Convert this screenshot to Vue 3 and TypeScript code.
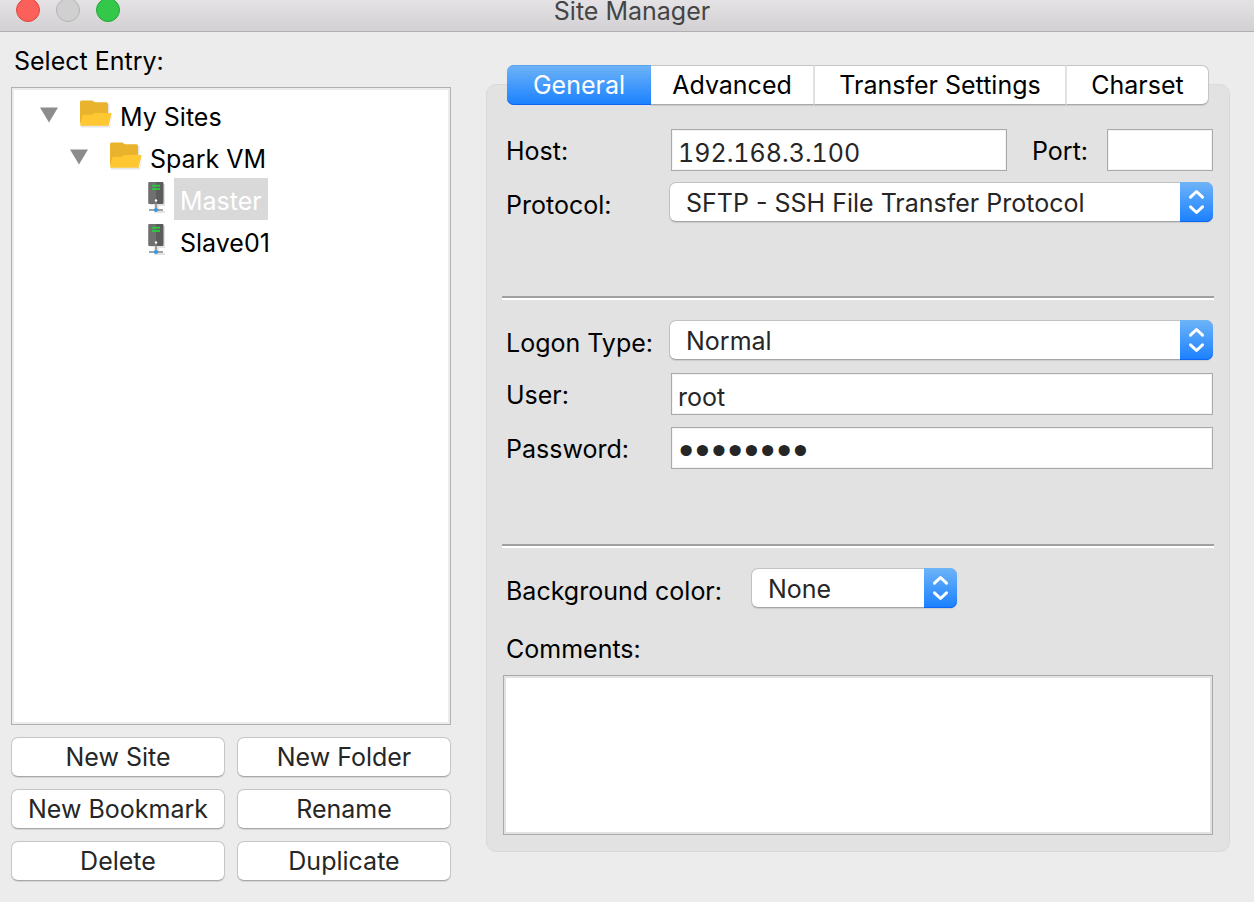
<script setup lang="ts">
import { ref } from 'vue'

interface TreeEntry {
  name: string
  level: number
  kind: 'folder' | 'server'
}

const entries: TreeEntry[] = [
  { name: 'My Sites', level: 0, kind: 'folder' },
  { name: 'Spark VM', level: 1, kind: 'folder' },
  { name: 'Master', level: 2, kind: 'server' },
  { name: 'Slave01', level: 2, kind: 'server' },
]
const actions: string[] = ['New Site', 'New Folder', 'New Bookmark', 'Rename', 'Delete', 'Duplicate']
const tabs: string[] = ['General', 'Advanced', 'Transfer Settings', 'Charset']

const selected = ref('Master')
const activeTab = ref('General')
const host = ref('192.168.3.100')
const port = ref('')
const protocol = ref('SFTP - SSH File Transfer Protocol')
const logonType = ref('Normal')
const user = ref('root')
const password = ref('password')
const background = ref('None')
const comments = ref('')
</script>

<template>
  <div class="window">
    <header class="titlebar">
      <div class="lights">
        <button class="light close" type="button" aria-label="Close"></button>
        <button class="light minimize" type="button" aria-label="Minimize" disabled></button>
        <button class="light maximize" type="button" aria-label="Zoom"></button>
      </div>
      <h1 class="title">Site Manager</h1>
    </header>

    <main class="content">
      <section class="sidebar">
        <h2 id="entry-label" class="heading">Select Entry:</h2>
        <ul class="tree" role="tree" aria-labelledby="entry-label">
          <li
            v-for="entry in entries"
            :key="entry.name"
            class="entry"
            :class="['level-' + entry.level, { selected: entry.name === selected }]"
            role="treeitem"
            :aria-selected="entry.name === selected"
            @click="selected = entry.name"
          >
            <svg v-if="entry.kind === 'folder'" class="arrow" viewBox="0 0 18 16" aria-hidden="true">
              <path d="M0 0.5H18L9 15.5Z" fill="#8c8c8c" />
            </svg>
            <svg v-if="entry.kind === 'folder'" class="icon" viewBox="0 0 32 36" aria-hidden="true">
              <path d="M1 30.5V28H30L32 17V20L30 30.5Z" fill="#e6e6e6" />
              <path d="M28 7H29.500V17H28Z" fill="#e6e6e6" />
              <path d="M0 5Q0 3.500 1.500 3.500H12Q13 3.500 13.700 4.500Q14.200 5.300 15.500 5.300H26.500Q28 5.300 28 7V26H0Z" fill="#e9b32d" />
              <path d="M0 28.500L2.300 18.800Q2.600 17.800 3.700 17.800H11.500L14 16H31.600L29 27.500Q28.700 28.800 27.500 28.800H1Q0 28.800 0 28.500Z" fill="#ffc832" />
            </svg>
            <svg v-else class="icon" viewBox="0 0 32 36" aria-hidden="true">
              <path d="M10 3H25V25H19V30H25V32H14V24H10Z" fill="#e3e3e3" />
              <rect x="8.500" y="1" width="15" height="22" rx="1" fill="#5c5c5c" />
              <path d="M9.500 1H16V23H9.500Q8.500 23 8.500 22V2Q8.500 1 9.500 1Z" fill="#707070" />
              <path d="M12 4.800H20M12 8H20" stroke="#32c341" stroke-width="2" />
              <path d="M16 20V28" stroke="#858585" stroke-width="1.500" />
              <circle cx="16" cy="19.500" r="1.200" fill="#fff" />
              <path d="M9 29H23" stroke="#858585" stroke-width="1.500" />
              <circle cx="16" cy="29" r="2" fill="#2d9be8" />
            </svg>
            <span class="entry-name">{{ entry.name }}</span>
          </li>
        </ul>
        <div class="actions">
          <button v-for="action in actions" :key="action" class="action" type="button">{{ action }}</button>
        </div>
      </section>

      <section class="details">
        <div class="tabs" role="tablist">
          <button
            v-for="tab in tabs"
            :key="tab"
            class="tab"
            :class="{ active: tab === activeTab }"
            type="button"
            role="tab"
            :aria-selected="tab === activeTab"
            @click="activeTab = tab"
          >{{ tab }}</button>
        </div>

        <form class="panel" @submit.prevent>
          <div class="group server-group">
            <div class="row">
              <label class="label" for="host">Host:</label>
              <input id="host" v-model="host" class="field" type="text" />
              <label class="port-label" for="port">Port:</label>
              <input id="port" v-model="port" class="field port" type="text" />
            </div>
            <div class="row select-row">
              <label class="label" for="protocol">Protocol:</label>
              <div class="select">
                <select id="protocol" v-model="protocol">
                  <option>SFTP - SSH File Transfer Protocol</option>
                </select>
                <svg class="stepper" viewBox="0 0 33 40" aria-hidden="true">
                  <path d="M10.500 15.200L16.500 9.500L22.500 15.200M10.500 24.800L16.500 30.500L22.500 24.800" />
                </svg>
              </div>
            </div>
          </div>

          <hr class="separator" />

          <div class="group logon-group">
            <div class="row select-row">
              <label class="label" for="logon">Logon Type:</label>
              <div class="select">
                <select id="logon" v-model="logonType">
                  <option>Normal</option>
                </select>
                <svg class="stepper" viewBox="0 0 33 40" aria-hidden="true">
                  <path d="M10.500 15.200L16.500 9.500L22.500 15.200M10.500 24.800L16.500 30.500L22.500 24.800" />
                </svg>
              </div>
            </div>
            <div class="row">
              <label class="label" for="user">User:</label>
              <input id="user" v-model="user" class="field" type="text" />
            </div>
            <div class="row">
              <label class="label" for="password">Password:</label>
              <input id="password" v-model="password" class="field password" type="password" />
            </div>
          </div>

          <hr class="separator" />

          <div class="row select-row">
            <label class="background-label" for="background">Background color:</label>
            <div class="select compact">
              <select id="background" v-model="background">
                <option>None</option>
              </select>
              <svg class="stepper" viewBox="0 0 33 40" aria-hidden="true">
                <path d="M10.500 15.200L16.500 9.500L22.500 15.200M10.500 24.800L16.500 30.500L22.500 24.800" />
              </svg>
            </div>
          </div>
          <label class="comments-label" for="comments">Comments:</label>
          <textarea id="comments" v-model="comments" class="comments"></textarea>
        </form>
      </section>
    </main>
  </div>
</template>

<style>
body {
  margin: 0;
  background: #ececec;
}
</style>

<style scoped>
.window {
  display: flex;
  flex-direction: column;
  min-height: 100vh;
  box-sizing: border-box;
  background: #ececec;
  color: #000;
  font-family: Inter, Roboto, "Liberation Sans", sans-serif;
  font-size: 25px;
  line-height: 30px;
}

.window *,
.window *::before {
  box-sizing: border-box;
}

button,
input,
select,
textarea {
  margin: 0;
  font: inherit;
  color: #262626;
  outline: none;
}

/* Title bar */
.titlebar {
  display: grid;
  grid-template-columns: 1fr auto 1fr;
  grid-template-rows: 20px;
  align-items: center;
  height: 32px;
  padding: 0 0 11px 10px;
  overflow: hidden;
  border-bottom: 1px solid #b1afb1;
  background: linear-gradient(#e4e2e4, #d2d0d2);
}

.lights {
  display: flex;
  gap: 16px;
  height: 24px;
  padding-left: 6px;
}

.light {
  width: 24px;
  height: 24px;
  padding: 0;
  border: 1px solid;
  border-radius: 50%;
}

.close {
  background: #fc605b;
  border-color: #e2463f;
}

.minimize {
  background: #d0d0d0;
  border-color: #b4b4b4;
}

.maximize {
  background: #34c84a;
  border-color: #20a835;
}

.title {
  align-self: start;
  margin: 0;
  color: #454545;
  font-size: 25px;
  font-weight: 400;
  line-height: 22px;
}

/* Two-column body */
.content {
  flex: 1;
  display: grid;
  grid-template-columns: minmax(0, 440fr) minmax(0, 744fr);
  gap: 35px;
  padding: 0 24px 0 11px;
}

.sidebar {
  display: flex;
  flex-direction: column;
  padding: 14px 0 21px;
}

.heading {
  margin: 0 0 11px 3px;
  font-size: 25px;
  font-weight: 400;
  line-height: 30px;
}

.tree {
  flex: 1;
  margin: 0 0 12px;
  padding: 6px 2px;
  list-style: none;
  background: #fff;
  border: 1px solid #b0b0b0;
  box-shadow: inset 0 0 0 2px #ececec;
}

.entry {
  display: flex;
  align-items: center;
  height: 42px;
  cursor: default;
}

.level-0 {
  padding-left: 26px;
}

.level-1 {
  padding-left: 56px;
}

.level-2 {
  padding-left: 126px;
}

.arrow {
  width: 18px;
  height: 16px;
  margin-right: 22px;
}

.icon {
  width: 32px;
  height: 36px;
  margin-right: 2px;
}

.entry-name {
  padding: 8px 6px 4px;
}

.selected .entry-name {
  background: #d9d9d9;
  color: #fff;
}

.actions {
  display: grid;
  grid-template-columns: 1fr 1fr;
  gap: 12px;
}

.action {
  height: 40px;
  padding: 0;
  border: 1px solid #c6c6c6;
  border-bottom-color: #a8a8a8;
  border-radius: 7px;
  background: #fff;
  box-shadow: 0 1px 1px rgba(0, 0, 0, 0.1);
}

/* Tabs */
.details {
  display: flex;
  flex-direction: column;
  padding: 33px 0 50px;
}

.tabs {
  position: relative;
  z-index: 1;
  display: grid;
  grid-template-columns: 144px 164px 252px 142px;
  justify-content: center;
  height: 40px;
  margin: 0 21px -21px;
}

.tab {
  padding: 0;
  border: 1px solid #c6c6c6;
  border-bottom-color: #a8a8a8;
  border-left: 0;
  border-right: 2px solid #e2e2e2;
  background: #fff;
  box-shadow: 0 1px 1px rgba(0, 0, 0, 0.1);
  color: #000;
}

.tab:first-child {
  border-radius: 7px 0 0 7px;
}

.tab:last-child {
  border-right: 1px solid #c6c6c6;
  border-radius: 0 7px 7px 0;
}

.tab.active {
  border: 0;
  background: linear-gradient(#6eb4f8, #1a80ff);
  box-shadow: inset 0 1px 0 #5aa3ee, inset 0 -1px 0 #0f66f5;
  color: #fff;
}

/* General panel */
.panel {
  flex: 1;
  display: flex;
  flex-direction: column;
  padding: 44px 16px 16px 15px;
  border: 1px solid #d9d9d9;
  border-radius: 10px;
  background: #e2e2e2;
}

.group {
  display: flex;
  flex-direction: column;
}

.server-group {
  min-height: 167px;
}

.logon-group {
  min-height: 224px;
}

.row {
  display: flex;
  flex: none;
  align-items: center;
  height: 42px;
  margin-bottom: 12px;
  padding-left: 4px;
}

.row label {
  padding-top: 2px;
}

.select-row {
  height: 40px;
  margin-bottom: 13px;
}

.row + .select-row {
  margin-top: -1px;
}

.select-row label {
  padding-top: 6px;
}

.label {
  flex: none;
  width: 165px;
}

.field {
  flex: 1;
  min-width: 0;
  height: 42px;
  padding: 6px 6px 0;
  border: 1px solid #a9a9a9;
  border-radius: 0;
  background: #fff;
  box-shadow: inset 0 0 0 1px #f4f4f4;
  font-variant-numeric: tabular-nums;
}

.port-label {
  width: 100px;
  padding-left: 25px;
}

.port {
  flex: none;
  width: 106px;
}

.password {
  padding-top: 0;
  font-size: 29px;
  -webkit-text-stroke: 2px #262626;
}

.select {
  position: relative;
  flex: 1;
  height: 40px;
  margin-left: -2px;
}

.select select {
  width: 100%;
  height: 40px;
  padding: 2px 40px 0 16px;
  appearance: none;
  border: 1px solid #c2c2c2;
  border-bottom-color: #a4a4a4;
  border-radius: 7px;
  background: #fff;
  box-shadow: 0 1px 1px rgba(0, 0, 0, 0.1);
}

.stepper {
  position: absolute;
  top: 0;
  right: 0;
  width: 33px;
  height: 40px;
  border-radius: 0 7px 7px 0;
  background: linear-gradient(#6eb4f8, #1a80ff);
  box-shadow: inset 0 -1px 0 #0f66f5;
  fill: none;
  stroke: #fff;
  stroke-width: 3;
  stroke-linecap: round;
  stroke-linejoin: round;
  pointer-events: none;
}

.separator {
  flex: none;
  width: calc(100% + 1px);
  height: 4px;
  margin: 0 0 20px;
  border: solid;
  border-color: #a0a0a0 transparent #fff;
  border-width: 2px 0;
}

.background-label {
  width: 247px;
}

.compact {
  flex: none;
  width: 206px;
}

.comments-label {
  margin: 13px 0 11px;
  padding-left: 4px;
}

.comments {
  flex: 1;
  min-height: 80px;
  margin-left: 1px;
  padding: 6px;
  resize: none;
  border: 1px solid #a9a9a9;
  border-radius: 0;
  background: #fff;
  box-shadow: inset 0 0 0 2px #e2e2e2;
}
</style>
